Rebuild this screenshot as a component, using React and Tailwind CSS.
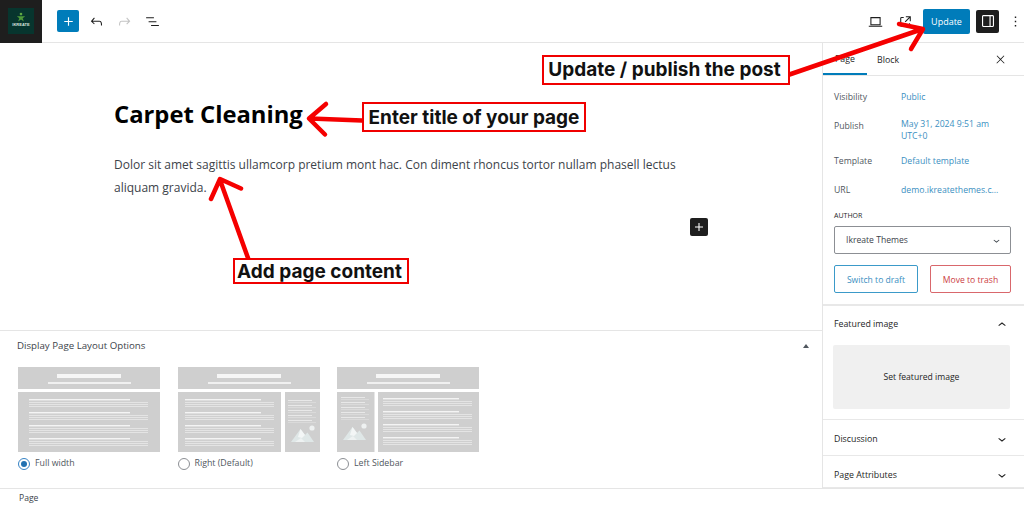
const font = { sans: 'font-["Open_Sans",sans-serif]' }

function WpIcon({ d, className = '' }) {
  return (
    <svg viewBox="0 0 24 24" className={className} fill="currentColor">
      <path d={d} />
    </svg>
  )
}

const chevronDown = 'M17.5 11.6L12 16l-5.5-4.4.9-1.2L12 14l4.5-3.6 1 1.2z'
const chevronUp = 'M6.5 12.4L12 8l5.5 4.4-.9 1.2L12 10l-4.5 3.6-1-1.2z'

function Logo() {
  return (
    <div className="w-[42px] h-[43px] bg-[#1e1e1e] flex items-center justify-center shrink-0">
      <div className="w-[26px] h-[26px] bg-[#07352e] flex flex-col items-center pt-1">
        <svg viewBox="0 0 12 11" className="w-[10px] h-[10px]">
          <circle cx="6" cy="2" r="1.6" fill="#5fa843" />
          <path d="M1 4.5h10L8 7l1.5 4L6 8.6 2.5 11 4 7z" fill="#4f9a3a" />
        </svg>
        <span className="text-[4px] leading-[5px] font-bold text-[#d6e2dc] font-['Liberation_Sans',sans-serif]">IKREATE</span>
      </div>
    </div>
  )
}

function Header() {
  return (
    <header className="h-[43px] flex items-center border-b border-[#e5e5e5] shrink-0">
      <Logo />
      <button className="ml-[15px] w-[22px] h-[22px] bg-[#007cba] rounded-[2px] flex items-center justify-center text-white">
        <WpIcon d="M18 11.2h-5.2V6h-1.6v5.2H6v1.6h5.2V18h1.6v-5.2H18z" className="w-[17px] h-[17px]" />
      </button>
      <WpIcon d="M18.3 11.7c-.6-.6-1.4-.9-2.3-.9H6.7l2.9-3.3-1.1-1-4.5 5L8.5 16l1-1-2.7-2.7H16c.5 0 .9.2 1.3.5 1 1 1 3.4 1 4.5v.3h1.5v-.2c0-1.5 0-4.3-1.5-5.7z" className="ml-[9px] w-[17px] h-[17px] text-[#1e1e1e]" />
      <WpIcon d="M15.6 6.5l-1.1 1 2.9 3.3H8c-.9 0-1.7.3-2.3.9-1.4 1.5-1.4 4.2-1.4 5.6v.2h1.5v-.3c0-1.1 0-3.5 1-4.5.3-.3.7-.5 1.3-.5h9.2L14.5 15l1.1 1.1 4.6-4.6-4.6-5z" className="ml-[11px] w-[17px] h-[17px] text-[#c4c4c4]" />
      <WpIcon d="M3 6h11v1.5H3V6zm3.5 5.5h11V13h-11v-1.5zM21 17H10v1.5h11V17z" className="ml-[11px] w-[17px] h-[17px] text-[#1e1e1e]" />
      <div className="ml-auto flex items-center">
        <svg viewBox="0 0 24 24" className="w-[17px] h-[17px] text-[#1e1e1e]" fill="none" stroke="currentColor" strokeWidth="1.5">
          <path d="M5.5 6.5h13v10h-13zM2.500 18.750h19" />
        </svg>
        <WpIcon d="M19.5 4.5h-7V6h4.44l-5.970 5.970 1.060 1.060L18 7.060v4.440h1.500v-7Zm-13 1a2 2 0 0 0-2 2v10a2 2 0 0 0 2 2h10a2 2 0 0 0 2-2v-3H17v3a.5.5 0 0 1-.5.5h-10a.5.5 0 0 1-.5-.5v-10a.5.5 0 0 1 .5-.5h3V5.500h-3Z" className="ml-[13px] w-[17px] h-[17px] text-[#1e1e1e]" />
        <button className="ml-[9px] w-[47px] h-[25px] pt-px bg-[#007cba] rounded-[2px] text-white text-[9px] flex items-center justify-center">
          Update
        </button>
        <button className="ml-[6px] w-[23px] h-[23px] bg-[#1e1e1e] rounded-[2px] flex items-center justify-center text-white">
          <WpIcon d="M18 4H6c-1.1 0-2 .9-2 2v12c0 1.1.9 2 2 2h12c1.1 0 2-.9 2-2V6c0-1.1-.9-2-2-2zm-4 14.500H6c-.3 0-.5-.2-.5-.5V6c0-.3.2-.5.5-.5h8v13zm4.500-.5c0 .3-.2.5-.5.5h-2.500v-13H18c.3 0 .5.2.5.5v12z" className="w-[18px] h-[18px]" />
        </button>
        <WpIcon d="M13 19h-2v-2h2v2zm0-6h-2v-2h2v2zm0-6h-2V5h2v2z" className="ml-[8px] w-[17px] h-[17px] text-[#1e1e1e]" />
      </div>
    </header>
  )
}

function Mountain({ x, y }) {
  return (
    <g transform={`translate(${x} ${y})`}>
      <circle cx="21" cy="2" r="2.600" fill="#eef1f1" />
      <path d="M0 16 9.500 3 14 9l2.500-2.500L23 16z" fill="#dfe7e7" />
      <path d="M9.500 3 7 11l4 1 3-3z" fill="#f3f6f6" />
      <path d="M4 16l6-4 4 4z" fill="#eef2f2" />
    </g>
  )
}

function TextBlock({ x, y, width, strong, groups = 4, gap = 13 }) {
  return (
    <g>
      {Array.from({ length: groups }).map((_, i) => (
        <g key={i} transform={`translate(${x} ${y + i * gap})`}>
          <rect x="0" y="0" width={strong} height="1.400" fill="#f4f4f4" />
          <rect x="0" y="3" width={width} height="1" fill="#e4e4e4" />
          <rect x="0" y="5" width={width} height="1" fill="#e4e4e4" />
          <rect x="0" y="7" width={width} height="1" fill="#e4e4e4" />
        </g>
      ))}
    </g>
  )
}

function Banner() {
  return (
    <g>
      <rect width="142" height="22" fill="#cfcfcf" />
      <rect x="39" y="7" width="64" height="4" fill="#f6f6f6" />
      <rect x="30" y="15" width="83" height="2" fill="#f0f0f0" />
    </g>
  )
}

function SideStack({ x }) {
  return (
    <g transform={`translate(${x} 8)`}>
      {[0, 5, 10, 15, 20].map(y => (
        <g key={y}>
          <rect y={y} width="24" height="1" fill="#e8e8e8" />
          <rect y={y + 2} width="28" height="1" fill="#dadada" />
        </g>
      ))}
    </g>
  )
}

function LayoutThumb({ kind }) {
  return (
    <svg viewBox="0 0 142 85" className="w-[142px] h-[85px] block">
      <Banner />
      {kind === 'full' && (
        <g>
          <rect y="25" width="142" height="60" fill="#cfcfcf" />
          <TextBlock x={11} y={32} width={119} strong={101} />
        </g>
      )}
      {kind === 'right' && (
        <g>
          <rect y="25" width="103" height="60" fill="#cfcfcf" />
          <rect x="107" y="25" width="35" height="60" fill="#cfcfcf" />
          <TextBlock x={7} y={32} width={89} strong={76} />
          <g transform="translate(0 25)"><SideStack x={110} /></g>
          <g transform="translate(0 25)"><Mountain x={113} y={34} /></g>
        </g>
      )}
      {kind === 'left' && (
        <g>
          <rect y="25" width="37.500" height="60" fill="#cfcfcf" />
          <rect x="41" y="25" width="101" height="60" fill="#cfcfcf" />
          <g transform="translate(0 22)"><SideStack x={4} /></g>
          <g transform="translate(0 22)"><Mountain x={6} y={35} /></g>
          <TextBlock x={46} y={31} width={89} strong={76} />
        </g>
      )}
    </svg>
  )
}

function LayoutOption({ kind, label, checked }) {
  return (
    <div className="w-[142px]">
      <LayoutThumb kind={kind} />
      <div className="mt-[6px] flex items-center gap-[5px] h-[12px]">
        <span className={`w-[12px] h-[12px] rounded-full border flex items-center justify-center shrink-0 ${checked ? 'border-[#3582c4]' : 'border-[#8c8f94]'}`}>
          {checked && <span className="w-[6px] h-[6px] rounded-full bg-[#2271b1]" />}
        </span>
        <span className="text-[8.800px] text-[#50575e]">{label}</span>
      </div>
    </div>
  )
}

function Editor() {
  return (
    <main className="w-[822px] flex flex-col shrink-0">
      <div className="h-[287px] pl-[114px] pr-[114px] relative">
        <h1 className="mt-[54px] text-[23.800px] leading-[34px] font-bold text-black">Carpet Cleaning</h1>
        <p className="mt-[22px] text-[12px] leading-[23px] text-[#3c434a] w-[590px]">
          Dolor sit amet sagittis ullamcorp pretium mont hac. Con diment rhoncus tortor nullam phasell lectus aliquam gravida.
        </p>
        <button className="absolute left-[690px] top-[175px] w-[18px] h-[18px] bg-[#1e1e1e] rounded-[2px] flex items-center justify-center text-white">
          <WpIcon d="M18 11.2h-5.2V6h-1.6v5.2H6v1.6h5.2V18h1.6v-5.2H18z" className="w-[16px] h-[16px]" />
        </button>
      </div>
      <section className="flex-1 border-t border-[#e5e5e5] pl-[18px] pr-[13px]">
        <div className="h-[36px] pb-[6px] -ml-px flex items-center justify-between">
          <span className="text-[9.700px] font-medium text-[#3c434a]">Display Page Layout Options</span>
          <span className="w-0 h-0 border-x-[3px] border-x-transparent border-b-[4px] border-b-[#50575e]" />
        </div>
        <div className="flex gap-[17.500px]">
          <LayoutOption kind="full" label="Full width" checked />
          <LayoutOption kind="right" label="Right (Default)" />
          <LayoutOption kind="left" label="Left Sidebar" />
        </div>
      </section>
    </main>
  )
}

function SummaryRow({ label, children, className = '', labelClass = '' }) {
  return (
    <div className={`flex items-start text-[8.700px] leading-[12px] ${className}`}>
      <span className={`w-[67px] text-[#50575e] shrink-0 ${labelClass}`}>{label}</span>
      <span className="text-[#3b8fc1]">{children}</span>
    </div>
  )
}

function Collapsed({ title, className }) {
  return (
    <div className={`flex items-center justify-between pl-[11px] pr-[15px] border-b border-[#e8e8e8] ${className}`}>
      <span className="text-[8.800px] font-medium text-[#1e1e1e]">{title}</span>
      <WpIcon d={chevronDown} className="w-[16px] h-[16px] text-[#1e1e1e]" />
    </div>
  )
}

function Sidebar() {
  return (
    <aside className="flex-1 border-l border-[#e5e5e5] flex flex-col">
      <div className="h-[33px] flex items-center border-b border-[#e5e5e5] shrink-0">
        <span className="w-[44px] h-full pt-[4px] flex items-center justify-center text-[8.800px] font-medium text-[#1e1e1e] border-b-2 border-[#007cba]">Page</span>
        <span className="ml-[10px] pt-[3px] text-[8.800px] font-medium text-[#1e1e1e]">Block</span>
        <WpIcon d="M13 11.8l6.1-6.3-1-1-6.1 6.2-6.1-6.2-1 1 6.1 6.3-6.5 6.7 1 1 6.5-6.6 6.5 6.6 1-1z" className="ml-auto mr-[18px] mt-[1px] w-[13px] h-[13px] text-[#1e1e1e]" />
      </div>
      <div className="h-[230px] pl-[11px] pr-[14px] pt-[15px] border-b-2 border-[#e8e8e8] shrink-0">
        <SummaryRow label="Visibility">Public</SummaryRow>
        <SummaryRow label="Publish" className="mt-[15px]" labelClass="mt-[2px]">May 31, 2024 9:51 am<br />UTC+0</SummaryRow>
        <SummaryRow label="Template" className="mt-[13px]">Default template</SummaryRow>
        <SummaryRow label="URL" className="mt-[17px]">demo.ikreatethemes.c...</SummaryRow>
        <div className="mt-[15px] text-[7px] leading-[10px] font-medium text-[#1e1e1e]">AUTHOR</div>
        <div className="mt-[5px] h-[28px] border border-[#8c8f94] rounded-[2px] flex items-center justify-between pl-[11px] pr-[7px] text-[8.600px] text-[#3c434a]">
          <span>Ikreate Themes</span>
          <WpIcon d={chevronDown} className="w-[13px] h-[13px] text-[#3c434a]" />
        </div>
        <div className="mt-[11px] flex justify-between">
          <button className="w-[84px] h-[28px] pt-[2px] border border-[#3b9ac9] rounded-[2px] text-[8.600px] text-[#3b8fc1]">Switch to draft</button>
          <button className="w-[81px] h-[28px] pt-[2px] border border-[#d9676c] rounded-[2px] text-[8.600px] text-[#cc3e44]">Move to trash</button>
        </div>
      </div>
      <div className="h-[114px] pl-[11px] pr-[15px] border-b border-[#e8e8e8] shrink-0">
        <div className="h-[39px] pb-[2px] flex items-center justify-between">
          <span className="text-[8.800px] font-medium text-[#1e1e1e]">Featured image</span>
          <WpIcon d={chevronUp} className="w-[16px] h-[16px] text-[#1e1e1e]" />
        </div>
        <div className="-ml-px h-[64px] w-[177px] pt-px bg-[#f0f0f0] rounded-[2px] flex items-center justify-center text-[8.600px] text-[#1e1e1e]">
          Set featured image
        </div>
      </div>
      <Collapsed title="Discussion" className="h-[37px] pt-[3px]" />
      <Collapsed title="Page Attributes" className="h-[32px] pt-[7px]" />
    </aside>
  )
}

function Label({ className, children }) {
  return (
    <div className={`absolute bg-white border-2 border-[#f00000] flex items-center justify-center text-[19px] font-bold text-[#111] font-['Inter',sans-serif] whitespace-nowrap ${className}`}>
      {children}
    </div>
  )
}

function Annotations() {
  return (
    <>
      <svg viewBox="0 0 1024 506" className="absolute inset-0 w-[1024px] h-[506px] pointer-events-none" fill="none" stroke="#f50000" strokeWidth="4.500" strokeLinecap="round" strokeLinejoin="round">
        <path d="M788 75 921 29.500M899 24l24 5-12 20" />
        <path d="M362 120.500 310 118.500M326 104l-17 14.500 16 16" />
        <path d="M248 258 220 180M211 199l9-20 21 9.500" />
      </svg>
      <Label className="left-[542px] top-[55px] w-[248px] h-[30px] pt-px pr-[3px]">Update / publish the post</Label>
      <Label className="left-[362px] top-[102px] w-[224px] h-[30px] pt-[3px]">Enter title of your page</Label>
      <Label className="left-[233px] top-[258px] w-[176px] h-[26px] pt-[3px] pr-[3px]">Add page content</Label>
    </>
  )
}

export default function App() {
  return (
    <div className={`relative w-[1024px] h-[506px] overflow-hidden bg-white flex flex-col ${font.sans}`}>
      <Header />
      <div className="flex-1 flex min-h-0">
        <Editor />
        <Sidebar />
      </div>
      <footer className="h-[18px] pt-[2px] border-t border-[#e5e5e5] pl-[19px] flex items-center text-[8.600px] text-[#3c434a] shrink-0">Page</footer>
      <Annotations />
    </div>
  )
}
